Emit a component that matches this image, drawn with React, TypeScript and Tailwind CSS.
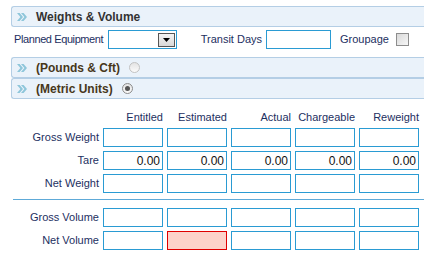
import React from "react";

const LABEL = "text-[11px] text-[#1d2f5f]";
const COLS = ["Entitled", "Estimated", "Actual", "Chargeable", "Reweight"];

export default function App() {
  return (
    <div className="w-[424px] h-[255px] bg-white overflow-hidden font-['Liberation_Sans',Arial,sans-serif]">
      <div className="pt-[6px]">
        <SectionBar title="Weights & Volume" tone="main" />

        {/* Equipment / transit row */}
        <div className="flex items-center pl-[14px] mt-[3px] h-[19px]">
          <span className={`${LABEL} w-[94px] tracking-[-0.4px] whitespace-nowrap`}>Planned Equipment</span>
          <div className="relative w-[69px] h-[19px] border border-[#2a9bd3] bg-white">
            <span className="absolute right-[1px] top-[2px] w-[17px] h-[14px] border border-[#555] bg-gradient-to-b from-[#f4f4f4] to-[#d8d8d8] flex items-center justify-center">
              <svg width="7" height="4" viewBox="0 0 7 4">
                <path d="M0 0h7L3.5 4z" fill="#000" />
              </svg>
            </span>
          </div>
          <span className={`${LABEL} w-[89px] text-right pr-[4px] whitespace-nowrap`}>Transit Days</span>
          <input
            readOnly
            className="w-[65px] h-[19px] border border-[#2a9bd3] bg-white outline-none"
          />
          <span className={`${LABEL} ml-[9px] w-[56px] whitespace-nowrap`}>Groupage</span>
          <span className="w-[13px] h-[13px] border border-[#8d8d8d] bg-gradient-to-br from-[#d9d9d9] to-[#f7f7f7]" />
        </div>

        <div className="mt-[8px]">
          <SectionBar title="(Pounds & Cft)" tone="sub" radio="off" />
          <SectionBar title="(Metric Units)" tone="sub" radio="on" />
        </div>

        {/* Weights */}
        <div className="mt-[11px] grid grid-cols-[99px_repeat(5,60px)] gap-x-[4px] gap-y-[4px]">
          <span />
          {COLS.map((c) => (
            <span key={c} className={`${LABEL} h-[14px] leading-[14px] text-right whitespace-nowrap`}>
              {c}
            </span>
          ))}
          <Row label="Gross Weight" />
          <Row label="Tare" values />
          <Row label="Net Weight" />
        </div>

        <div className="ml-[13px] mt-[6px] h-px bg-[#5eaad8]" />

        {/* Volumes */}
        <div className="mt-[8px] grid grid-cols-[99px_repeat(5,60px)] gap-x-[4px] gap-y-[4px]">
          <Row label="Gross Volume" />
          <Row label="Net Volume" errorCol={1} />
        </div>
      </div>
    </div>
  );
}

function Row({ label, values, errorCol }: { label: string; values?: boolean; errorCol?: number }) {
  return (
    <>
      <span className={`${LABEL} h-[19px] flex items-center justify-end whitespace-nowrap`}>{label}</span>
      {COLS.map((c, i) => (
        <input
          key={c}
          readOnly
          defaultValue={values ? "0.00" : ""}
          className={`w-[60px] h-[19px] border text-right pr-[2px] text-[12px] text-[#111] outline-none ${
            errorCol === i ? "border-[#e00000] bg-[#fdd3ca]" : "border-[#2a9bd3] bg-white"
          }`}
        />
      ))}
    </>
  );
}

function SectionBar({ title, tone, radio }: { title: string; tone: "main" | "sub"; radio?: "on" | "off" }) {
  return (
    <div className="ml-[11px] h-[21px] flex items-center border border-r-0 border-[#b4cee5] rounded-l-[3px] bg-[#eaf2fa] pl-[5px]">
      <svg width="10" height="8" viewBox="0 0 10 8" className="shrink-0">
        <path d="M0 0h2.6l3.4 4-3.4 4H0l3.4-4z M4 0h2.6L10 4 6.6 8H4l3.4-4z" fill="#8ec6da" />
      </svg>
      <span
        className={`ml-[9px] font-bold whitespace-nowrap ${
          tone === "main" ? "text-[12px] text-[#333]" : "text-[12px] text-[#47371a]"
        }`}
      >
        {title}
      </span>
      {radio === "off" && (
        <span className="ml-[9px] w-[11px] h-[11px] rounded-full border border-[#c2c2c2] bg-gradient-to-b from-[#e4e4e4] to-[#fafafa]" />
      )}
      {radio === "on" && (
        <span className="ml-[9px] w-[11px] h-[11px] rounded-full border border-[#8c8c8c] bg-gradient-to-b from-[#e4e4e4] to-[#fafafa] flex items-center justify-center">
          <span className="w-[5px] h-[5px] rounded-full bg-[#555]" />
        </span>
      )}
    </div>
  );
}
